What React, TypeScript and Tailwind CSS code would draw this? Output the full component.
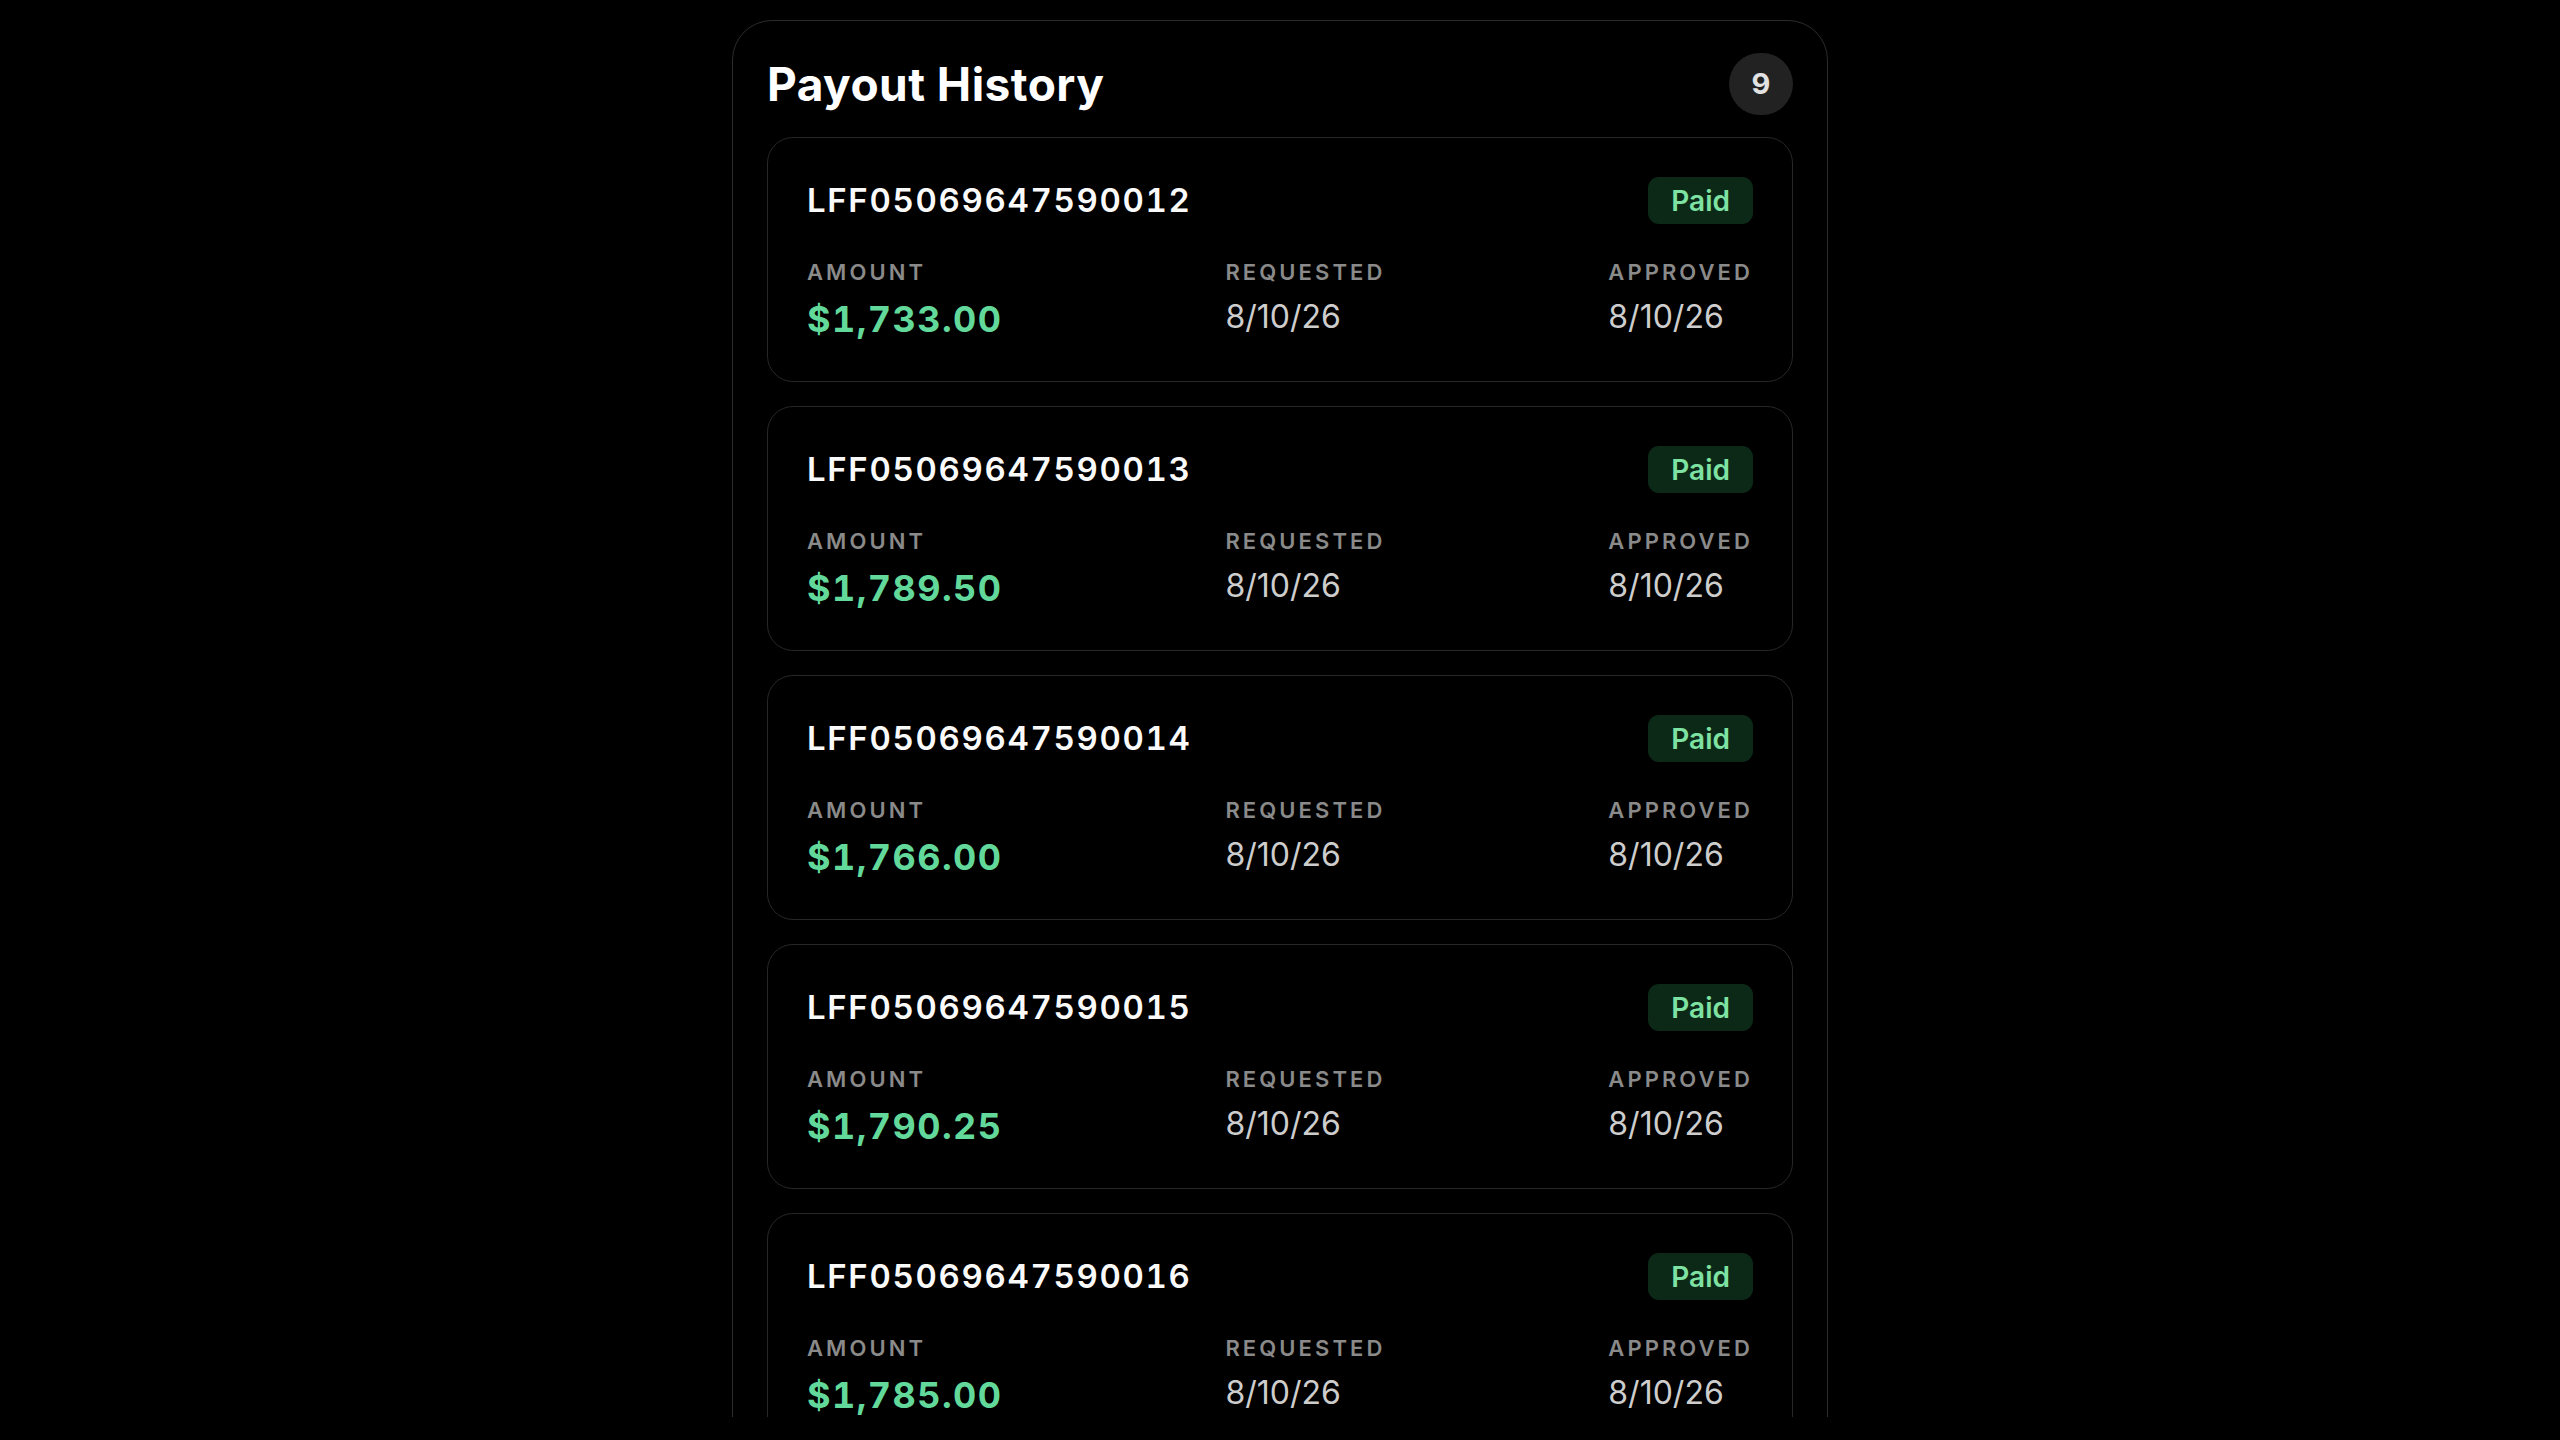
import React from "react";

type Payout = { id: string; amount: string; requested: string; approved: string };

const payouts: Payout[] = [
  { id: "LFF05069647590012", amount: "$1,733.00", requested: "8/10/26", approved: "8/10/26" },
  { id: "LFF05069647590013", amount: "$1,789.50", requested: "8/10/26", approved: "8/10/26" },
  { id: "LFF05069647590014", amount: "$1,766.00", requested: "8/10/26", approved: "8/10/26" },
  { id: "LFF05069647590015", amount: "$1,790.25", requested: "8/10/26", approved: "8/10/26" },
  { id: "LFF05069647590016", amount: "$1,785.00", requested: "8/10/26", approved: "8/10/26" },
  { id: "LFF05069647590017", amount: "$1,742.75", requested: "8/10/26", approved: "8/10/26" },
  { id: "LFF05069647590018", amount: "$1,771.00", requested: "8/10/26", approved: "8/10/26" },
  { id: "LFF05069647590019", amount: "$1,758.50", requested: "8/10/26", approved: "8/10/26" },
  { id: "LFF05069647590020", amount: "$1,796.00", requested: "8/10/26", approved: "8/10/26" },
];

function Label({ children }: { children: React.ReactNode }) {
  return (
    <div className="text-[22px] leading-[25px] font-semibold tracking-[0.14em] text-[#8a8a8a]">
      {children}
    </div>
  );
}

function PayoutCard({ p }: { p: Payout }) {
  return (
    <div className="rounded-[26px] border border-[#272727] bg-black px-[39px] pt-[39px] pb-[40px]">
      <div className="flex h-[47px] items-center justify-between">
        <div className="text-[33px] font-semibold tabular-nums tracking-[0.05em] text-[#fafafa]">
          {p.id}
        </div>
        <div className="flex h-[47px] items-center rounded-[11px] bg-[#0c2918] px-[23px] text-[28px] font-semibold text-[#7ee2a2]">
          Paid
        </div>
      </div>
      <div className="mt-[36px] flex justify-between">
        <div className="flex flex-col gap-[13px]">
          <Label>AMOUNT</Label>
          <div className="text-[36px] leading-[43px] font-bold tabular-nums tracking-[0.04em] text-[#62d99a]">
            {p.amount}
          </div>
        </div>
        <div className="flex flex-col gap-[13px]">
          <Label>REQUESTED</Label>
          <div className="text-[32px] leading-[38px] font-normal text-[#cdcdcd]">{p.requested}</div>
        </div>
        <div className="flex flex-col gap-[13px]">
          <Label>APPROVED</Label>
          <div className="text-[32px] leading-[38px] font-normal text-[#cdcdcd]">{p.approved}</div>
        </div>
      </div>
    </div>
  );
}

export default function App() {
  return (
    <div
      className="h-screen w-full bg-black"
      style={{ fontFamily: "Inter, 'Noto Sans', sans-serif" }}
    >
      <div className="h-[1417px] overflow-hidden pt-[20px]">
        <div className="mx-auto w-[1096px] rounded-[40px] border border-[#2c2c2c] bg-black px-[34px] pt-[32px] pb-[34px]">
          <div className="flex h-[62px] items-center justify-between">
            <h1 className="text-[46px] font-bold tracking-[0.01em] text-white">Payout History</h1>
            <div className="flex h-[62px] w-[64px] items-center justify-center rounded-full bg-[#222222] text-[29px] font-bold text-[#e2e2e2]">
              9
            </div>
          </div>
          <div className="mt-[22px] flex flex-col gap-[24px]">
            {payouts.map((p) => (
              <PayoutCard key={p.id} p={p} />
            ))}
          </div>
        </div>
      </div>
    </div>
  );
}
